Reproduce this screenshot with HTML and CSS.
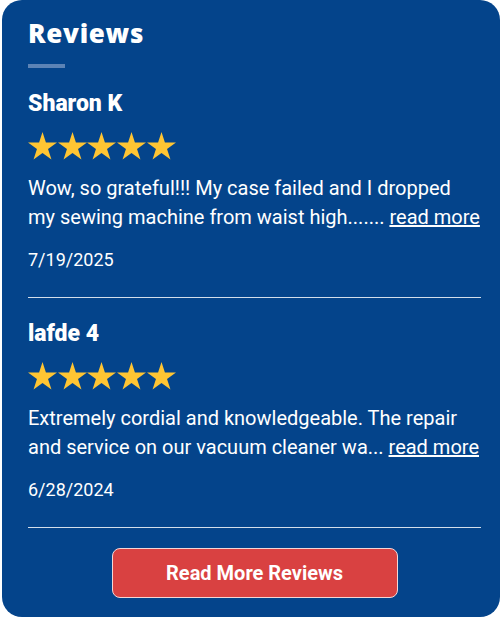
FILE: index.html
```html
<!DOCTYPE html>
<html lang="en">
<head>
<meta charset="utf-8">
<title>Reviews</title>
<link rel="stylesheet" href="styles.css">
</head>
<body>
<section class="card">
  <h2 class="title">Reviews</h2>
  <div class="bar"></div>

  <article class="review">
    <h3 class="name">Sharon K</h3>
    <div class="stars">
      <svg class="star" viewBox="0 0 29 27.6"><polygon points="14.5,0 17.92,10.54 29,10.54 20.04,17.05 23.46,27.59 14.5,21.08 5.54,27.59 8.96,17.05 0,10.54 11.08,10.54"/></svg>
      <svg class="star" viewBox="0 0 29 27.6"><polygon points="14.5,0 17.92,10.54 29,10.54 20.04,17.05 23.46,27.59 14.5,21.08 5.54,27.59 8.96,17.05 0,10.54 11.08,10.54"/></svg>
      <svg class="star" viewBox="0 0 29 27.6"><polygon points="14.5,0 17.92,10.54 29,10.54 20.04,17.05 23.46,27.59 14.5,21.08 5.54,27.59 8.96,17.05 0,10.54 11.08,10.54"/></svg>
      <svg class="star" viewBox="0 0 29 27.6"><polygon points="14.5,0 17.92,10.54 29,10.54 20.04,17.05 23.46,27.59 14.5,21.08 5.54,27.59 8.96,17.05 0,10.54 11.08,10.54"/></svg>
      <svg class="star" viewBox="0 0 29 27.6"><polygon points="14.5,0 17.92,10.54 29,10.54 20.04,17.05 23.46,27.59 14.5,21.08 5.54,27.59 8.96,17.05 0,10.54 11.08,10.54"/></svg>
    </div>
    <p class="text">Wow, so grateful!!! My case failed and I dropped my sewing machine from waist high....... <a href="#" class="more">read more</a></p>
    <p class="date">7/19/2025</p>
  </article>

  <article class="review">
    <h3 class="name">lafde 4</h3>
    <div class="stars">
      <svg class="star" viewBox="0 0 29 27.6"><polygon points="14.5,0 17.92,10.54 29,10.54 20.04,17.05 23.46,27.59 14.5,21.08 5.54,27.59 8.96,17.05 0,10.54 11.08,10.54"/></svg>
      <svg class="star" viewBox="0 0 29 27.6"><polygon points="14.5,0 17.92,10.54 29,10.54 20.04,17.05 23.46,27.59 14.5,21.08 5.54,27.59 8.96,17.05 0,10.54 11.08,10.54"/></svg>
      <svg class="star" viewBox="0 0 29 27.6"><polygon points="14.5,0 17.92,10.54 29,10.54 20.04,17.05 23.46,27.59 14.5,21.08 5.54,27.59 8.96,17.05 0,10.54 11.08,10.54"/></svg>
      <svg class="star" viewBox="0 0 29 27.6"><polygon points="14.5,0 17.92,10.54 29,10.54 20.04,17.05 23.46,27.59 14.5,21.08 5.54,27.59 8.96,17.05 0,10.54 11.08,10.54"/></svg>
      <svg class="star" viewBox="0 0 29 27.6"><polygon points="14.5,0 17.92,10.54 29,10.54 20.04,17.05 23.46,27.59 14.5,21.08 5.54,27.59 8.96,17.05 0,10.54 11.08,10.54"/></svg>
    </div>
    <p class="text">Extremely cordial and knowledgeable. The repair and service on our vacuum cleaner wa... <a href="#" class="more">read more</a></p>
    <p class="date">6/28/2024</p>
  </article>

  <div class="actions">
    <a href="#" class="btn">Read More Reviews</a>
  </div>
</section>
</body>
</html>
```
FILE: styles.css
```css
* { box-sizing: border-box; }
html, body { margin: 0; padding: 0; background: #ffffff; }
body { font-family: Roboto, "Liberation Sans", Arial, sans-serif; color: #ffffff; }

.card {
  margin: 0 0 0 2px;
  width: 498px;
  height: 617px;
  background: #04448b;
  border-radius: 20px;
  padding: 17px 19px 0 26px;
}

.title {
  margin: 0;
  font-family: "Open Sans", Roboto, sans-serif;
  font-size: 26px;
  line-height: 32px;
  font-weight: 800;
  letter-spacing: 0.7px;
}

.bar {
  margin-top: 15px;
  width: 37px;
  height: 4px;
  background: #5c83b5;
}

.review {
  padding: 23px 0 23.5px;
  border-bottom: 1px solid #d3deea;
}

.name {
  margin: 0;
  font-size: 23px;
  line-height: 26px;
  font-weight: 900;
}

.stars {
  margin-top: 15px;
  display: flex;
  gap: 0.7px;
  height: 27.6px;
}

.star {
  width: 29px;
  height: 27.6px;
  fill: #ffc533;
  display: block;
}

.text {
  margin: 14px 0 0;
  font-size: 20px;
  line-height: 29px;
}

.more {
  color: #ffffff;
  text-decoration: underline;
}

.date {
  margin: 13px 0 0;
  font-size: 18px;
  line-height: 29px;
}

.actions {
  margin-top: 20px;
  display: flex;
  justify-content: center;
}

.btn {
  width: 286px;
  height: 50px;
  display: flex;
  align-items: center;
  justify-content: center;
  background: #d94141;
  border: 1px solid #f3d6d6;
  border-radius: 8px;
  color: #ffffff;
  font-size: 20px;
  font-weight: 700;
  text-decoration: none;
}
```
